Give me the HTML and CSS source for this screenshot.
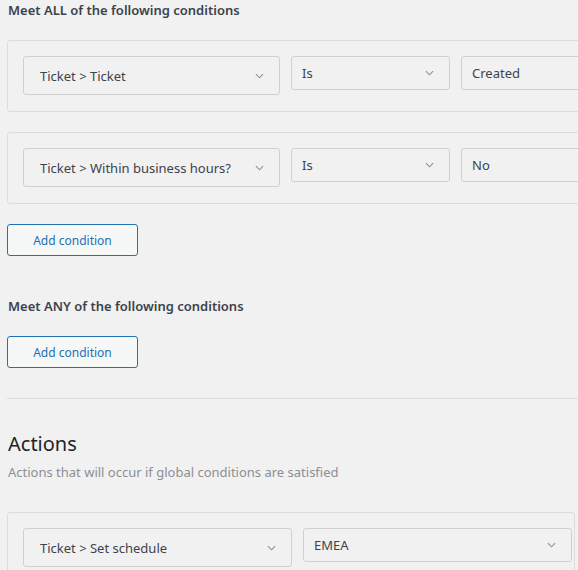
FILE: index.html
```html
<!DOCTYPE html>
<html>
<head>
<meta charset="utf-8">
<link rel="stylesheet" href="styles.css">
</head>
<body>
<div class="page">
  <div class="group-title">Meet ALL of the following conditions</div>
  <div class="card first">
    <div class="row cond">
      <div class="select tall"><span>Ticket &gt; Ticket</span><svg class="chev" viewBox="0 0 10 6"><path d="M1 1 L5 5 L9 1"/></svg></div>
      <div class="select"><span>Is</span><svg class="chev" viewBox="0 0 10 6"><path d="M1 1 L5 5 L9 1"/></svg></div>
      <div class="select field"><span>Created</span></div>
    </div>
  </div>
  <div class="card">
    <div class="row cond">
      <div class="select tall"><span>Ticket &gt; Within business hours?</span><svg class="chev" viewBox="0 0 10 6"><path d="M1 1 L5 5 L9 1"/></svg></div>
      <div class="select"><span>Is</span><svg class="chev" viewBox="0 0 10 6"><path d="M1 1 L5 5 L9 1"/></svg></div>
      <div class="select field"><span>No</span></div>
    </div>
  </div>
  <button class="btn">Add condition</button>

  <div class="group-title any">Meet ANY of the following conditions</div>
  <button class="btn">Add condition</button>

  <div class="divider"></div>

  <h2 class="section-title">Actions</h2>
  <div class="section-sub">Actions that will occur if global conditions are satisfied</div>

  <div class="card actions">
    <div class="row act">
      <div class="select tall"><span>Ticket &gt; Set schedule</span><svg class="chev" viewBox="0 0 10 6"><path d="M1 1 L5 5 L9 1"/></svg></div>
      <div class="select"><span>EMEA</span><svg class="chev" viewBox="0 0 10 6"><path d="M1 1 L5 5 L9 1"/></svg></div>
    </div>
  </div>
</div>
</body>
</html>
```

FILE: styles.css
```css
html, body {
  margin: 0;
  padding: 0;
  background: #f1f1f1;
  overflow: hidden;
}
body {
  font-family: "Noto Sans", "Open Sans", sans-serif;
  color: #3c434a;
  font-size: 13px;
}
.page {
  padding-left: 7px;
  width: 620px;
}
.group-title {
  font-size: 13px;
  font-weight: 600;
  line-height: 20px;
  height: 20px;
  color: #3c434a;
  padding-left: 1px;
}
.group-title.any {
  margin-top: 40px;
}
.card {
  border: 1px solid #dcdcde;
  border-radius: 3px;
  padding: 15px 15px 16px;
  margin-top: 20px;
}
.card.actions {
  margin-top: 30px;
  width: 536px;
}
.row {
  display: grid;
  column-gap: 11px;
  align-items: start;
}
.row.cond {
  grid-template-columns: 257px 159px 200px;
}
.row.act {
  grid-template-columns: 269px 269px;
}
.select {
  box-sizing: border-box;
  height: 34px;
  border: 1px solid #d0d0d2;
  border-radius: 3px;
  display: flex;
  align-items: center;
  justify-content: space-between;
  padding: 0 12px 0 10px;
  font-size: 13px;
  color: #3c434a;
}
.select.tall {
  height: 39px;
  padding-left: 16px;
}
.chev {
  width: 9px;
  height: 6px;
  fill: none;
  stroke: #8c8f94;
  stroke-width: 1.2;
  flex: none;
  margin-right: 3px;
}
.btn {
  display: block;
  box-sizing: border-box;
  margin-top: 20px;
  width: 131px;
  height: 32px;
  border: 1px solid #2271b1;
  border-radius: 3px;
  background: #f6f7f7;
  color: #2271b1;
  font-family: inherit;
  font-size: 12px;
  padding: 0;
  cursor: pointer;
}
.divider {
  margin-top: 30px;
  height: 1px;
  background: #dcdcde;
}
.section-title {
  margin: 31px 0 0 1px;
  font-size: 20px;
  font-weight: 400;
  line-height: 28px;
  color: #1d2327;
}
.section-sub {
  margin: 4px 0 0 1px;
  font-size: 13px;
  line-height: 20px;
  color: #8c8f94;
}
```
